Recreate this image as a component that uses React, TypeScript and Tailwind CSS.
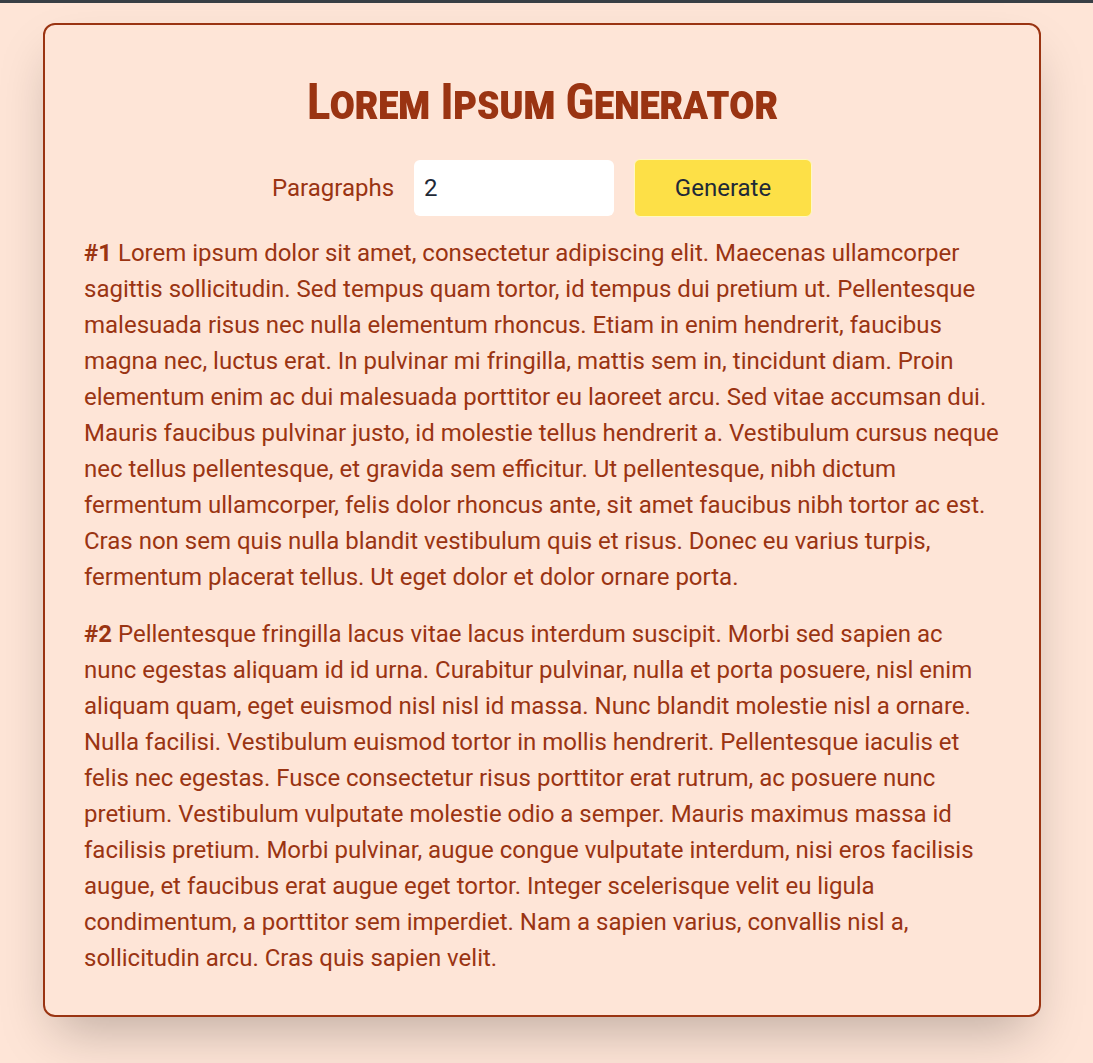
import React, { useState } from "react";

const PARAGRAPHS = [
    "Lorem ipsum dolor sit amet, consectetur adipiscing elit. Maecenas ullamcorper sagittis sollicitudin. Sed tempus quam tortor, id tempus dui pretium ut. Pellentesque malesuada risus nec nulla elementum rhoncus. Etiam in enim hendrerit, faucibus magna nec, luctus erat. In pulvinar mi fringilla, mattis sem in, tincidunt diam. Proin elementum enim ac dui malesuada porttitor eu laoreet arcu. Sed vitae accumsan dui. Mauris faucibus pulvinar justo, id molestie tellus hendrerit a. Vestibulum cursus neque nec tellus pellentesque, et gravida sem efficitur. Ut pellentesque, nibh dictum fermentum ullamcorper, felis dolor rhoncus ante, sit amet faucibus nibh tortor ac est. Cras non sem quis nulla blandit vestibulum quis et risus. Donec eu varius turpis, fermentum placerat tellus. Ut eget dolor et dolor ornare porta.",
    "Pellentesque fringilla lacus vitae lacus interdum suscipit. Morbi sed sapien ac nunc egestas aliquam id id urna. Curabitur pulvinar, nulla et porta posuere, nisl enim aliquam quam, eget euismod nisl nisl id massa. Nunc blandit molestie nisl a ornare. Nulla facilisi. Vestibulum euismod tortor in mollis hendrerit. Pellentesque iaculis et felis nec egestas. Fusce consectetur risus porttitor erat rutrum, ac posuere nunc pretium. Vestibulum vulputate molestie odio a semper. Mauris maximus massa id facilisis pretium. Morbi pulvinar, augue congue vulputate interdum, nisi eros facilisis augue, et faucibus erat augue eget tortor. Integer scelerisque velit eu ligula condimentum, a porttitor sem imperdiet. Nam a sapien varius, convallis nisl a, sollicitudin arcu. Cras quis sapien velit.",
];

export default function App() {
    const [count, setCount] = useState("2");

    return (
        <div className="min-h-screen bg-[#fee5d7] border-t-[3px] border-[#383f45] font-['Roboto',sans-serif] text-[#9a3412]">
            <div className="pt-5 pb-10">
                {/* CARD */}
                <div className="ml-[43px] w-[998px] border-2 border-[#9a3412] rounded-xl shadow-2xl px-[39px] pt-[45px] pb-[39px]">
                    <h1 className="text-center text-[50px] leading-[64px] font-bold tracking-[-1px] [font-variant:small-caps] [font-stretch:condensed]">
                        Lorem Ipsum Generator
                    </h1>
                    <form
                        className="flex justify-center items-center gap-5 mt-[25px]"
                        onSubmit={(e) => e.preventDefault()}
                    >
                        <label className="text-[24px]">Paragraphs</label>
                        <input
                            type="number"
                            value={count}
                            onChange={(e) => setCount(e.target.value)}
                            className="w-[200px] h-[56px] bg-white rounded-md px-2.5 text-[24px] text-[#1f2937] outline-none"
                        />
                        <button
                            type="submit"
                            className="w-[178px] h-[58px] bg-[#fde047] border border-[#fef9c3] rounded-md text-[24px] text-[#1f2937]"
                        >
                            Generate
                        </button>
                    </form>
                    <div className="mt-[18px] flex flex-col gap-[21px]">
                        {PARAGRAPHS.map((text, i) => (
                            <p key={i} className="text-[24px] leading-[36px]">
                                <span className="font-bold">#{i + 1}</span> {text}
                            </p>
                        ))}
                    </div>
                </div>
            </div>
        </div>
    );
}
